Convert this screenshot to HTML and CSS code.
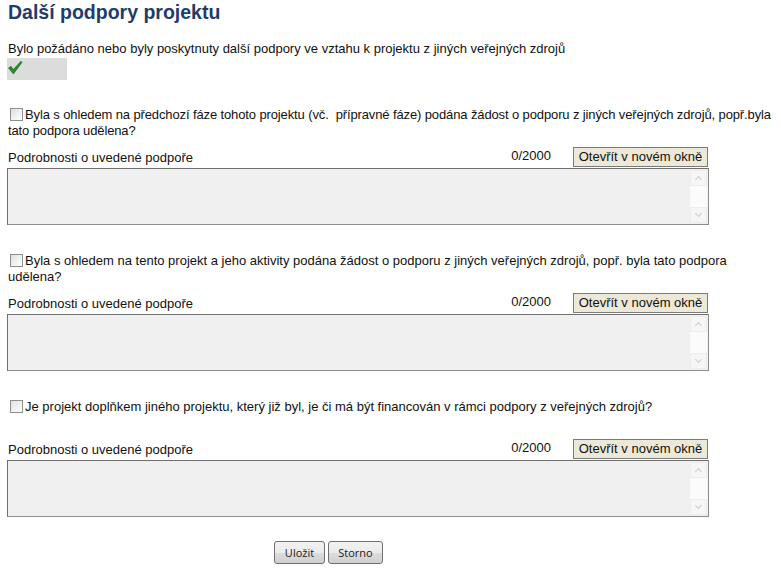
FILE: index.html
```html
<!DOCTYPE html>
<html lang="cs">
<head>
<meta charset="utf-8">
<title>Další podpory projektu</title>
<link rel="stylesheet" href="styles.css">
</head>
<body>
<div class="page">
  <h1 class="title">Další podpory projektu</h1>
  <p class="intro">Bylo požádáno nebo byly poskytnuty další podpory ve vztahu k projektu z jiných veřejných zdrojů</p>
  <div class="yes-box">
    <svg class="check" width="15" height="15" viewBox="0 0 15 15" aria-hidden="true">
      <path d="M0.5 7 L3 5.2 L5.2 8.6 L13 0.2 L14 1.4 L5.4 13 Z" fill="#2b8a2b" stroke="#1f6a1f" stroke-width="0.6" stroke-linejoin="round"/>
    </svg>
  </div>

  <section class="block block-first">
    <p class="question q-tight"><span class="cb"></span>Byla s ohledem na předchozí fáze tohoto projektu (vč.&nbsp; přípravné fáze) podána žádost o podporu z jiných veřejných zdrojů, popř.byla tato podpora udělena?</p>
    <div class="details-head">
      <span class="label">Podrobnosti o uvedené podpoře</span>
      <span class="counter">0/2000</span>
      <button class="open-btn" type="button">Otevřít v novém okně</button>
    </div>
    <div class="textarea">
      <div class="ta-body"></div>
      <div class="sb"><span class="sb-btn sb-up"></span><span class="sb-track"></span><span class="sb-btn sb-down"></span></div>
    </div>
  </section>

  <section class="block">
    <p class="question"><span class="cb"></span>Byla s ohledem na tento projekt a jeho aktivity podána žádost o podporu z jiných veřejných zdrojů, popř. byla tato podpora<br>udělena?</p>
    <div class="details-head">
      <span class="label">Podrobnosti o uvedené podpoře</span>
      <span class="counter">0/2000</span>
      <button class="open-btn" type="button">Otevřít v novém okně</button>
    </div>
    <div class="textarea">
      <div class="ta-body"></div>
      <div class="sb"><span class="sb-btn sb-up"></span><span class="sb-track"></span><span class="sb-btn sb-down"></span></div>
    </div>
  </section>

  <section class="block">
    <p class="question"><span class="cb"></span>Je projekt doplňkem jiného projektu, který již byl, je či má být financován v rámci podpory z veřejných zdrojů?</p>
    <div class="details-head">
      <span class="label">Podrobnosti o uvedené podpoře</span>
      <span class="counter">0/2000</span>
      <button class="open-btn" type="button">Otevřít v novém okně</button>
    </div>
    <div class="textarea">
      <div class="ta-body"></div>
      <div class="sb"><span class="sb-btn sb-up"></span><span class="sb-track"></span><span class="sb-btn sb-down"></span></div>
    </div>
  </section>

  <div class="actions">
    <button class="act-btn btn-save" type="button">Uložit</button>
    <button class="act-btn btn-cancel" type="button">Storno</button>
  </div>
</div>
</body>
</html>
```

FILE: styles.css
```css
html, body {
  margin: 0;
  padding: 0;
  background: #ffffff;
}

body {
  font-family: "Liberation Sans", Arial, sans-serif;
  font-size: 13px;
  color: #111111;
  overflow: hidden;
}

.page {
  padding: 0 0 0 7px;
}

.title {
  margin: 0;
  padding-left: 1px;
  font-size: 19.5px;
  line-height: 24px;
  font-weight: bold;
  color: #1f3c6b;
}

.intro {
  margin: 17px 0 0;
  padding-left: 1px;
  line-height: 16px;
}

.yes-box {
  margin-top: 1px;
  width: 60px;
  height: 22px;
  background: #dcdcdc;
}

.check {
  display: block;
  margin-left: 1px;
  padding-top: 3px;
}

.block {
  margin-top: 28px;
}

.block-first {
  margin-top: 27px;
}

.question {
  margin: 0 0 8px;
  padding-left: 1px;
  min-height: 32px;
  line-height: 16px;
}

.q-tight {
  letter-spacing: -0.12px;
}

.cb {
  display: inline-block;
  box-sizing: border-box;
  width: 13px;
  height: 13px;
  margin-left: 2px;
  margin-right: 2px;
  vertical-align: -2px;
  border: 1px solid #8e8f8f;
  background: linear-gradient(135deg, #dcdfe3 0%, #f2f3f5 60%, #ffffff 100%);
}

.details-head {
  display: flex;
  align-items: flex-start;
  width: 702px;
  height: 21px;
}

.label {
  flex: 1;
  padding-left: 1px;
  padding-top: 3px;
  line-height: 16px;
}

.counter {
  padding-top: 1px;
  line-height: 16px;
  margin-right: 22px;
}

.open-btn {
  box-sizing: border-box;
  width: 135px;
  height: 20px;
  margin: 0 1px 0 0;
  padding: 0;
  font-family: "Liberation Sans", Arial, sans-serif;
  font-size: 13px;
  line-height: 16px;
  color: #111111;
  background: #ece9d8;
  border: 1px solid #7a7a7a;
  border-radius: 0;
}

.textarea {
  box-sizing: border-box;
  display: flex;
  width: 702px;
  height: 57px;
  border: 1px solid #8c8c8c;
  border-top-color: #6f6f6f;
  border-left-color: #6f6f6f;
  background: #f0f0f0;
}

.ta-body {
  flex: 1;
}

.sb {
  display: flex;
  flex-direction: column;
  width: 17px;
  margin: 1px 1px 1px 0;
  background: #fbfbfb;
}

.sb-btn {
  position: relative;
  box-sizing: border-box;
  height: 16px;
  border: 1px solid #eceeee;
  background: #f6f6f6;
}

.sb-track {
  flex: 1;
}

.sb-btn::after {
  content: "";
  position: absolute;
  left: 5px;
  width: 4px;
  height: 4px;
  border-left: 1px solid #c9cdd1;
  border-top: 1px solid #c9cdd1;
}

.sb-up::after {
  top: 6px;
  transform: rotate(45deg);
}

.sb-down::after {
  top: 3px;
  transform: rotate(225deg);
}

.actions {
  display: flex;
  gap: 3px;
  margin-top: 24px;
  padding-left: 267px;
}

.act-btn {
  box-sizing: border-box;
  height: 23px;
  padding: 0;
  font-family: "Open Sans", "Noto Sans", sans-serif;
  font-size: 11px;
  color: #1a1a1a;
  border: 1px solid #707070;
  border-radius: 3px;
  background: linear-gradient(#f2f2f2 0%, #ebebeb 50%, #dddddd 51%, #cfcfcf 100%);
}

.btn-save {
  width: 51px;
}

.btn-cancel {
  width: 55px;
}
```
